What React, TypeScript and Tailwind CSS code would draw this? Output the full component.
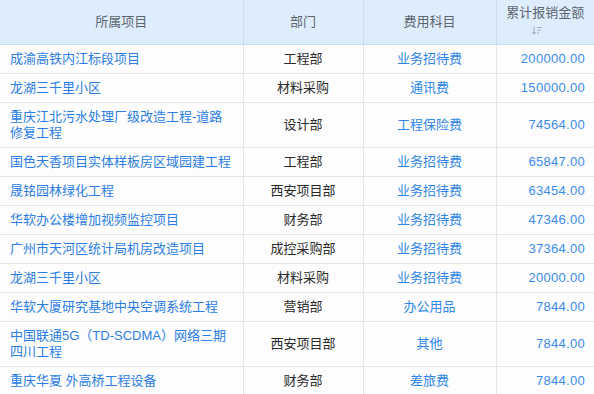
const rows = [
  { project: "成渝高铁内江标段项目", dept: "工程部", item: "业务招待费", amount: "200000.00" },
  { project: "龙湖三千里小区", dept: "材料采购", item: "通讯费", amount: "150000.00" },
  { project: "重庆江北污水处理厂级改造工程-道路修复工程", dept: "设计部", item: "工程保险费", amount: "74564.00" },
  { project: "国色天香项目实体样板房区域园建工程", dept: "工程部", item: "业务招待费", amount: "65847.00" },
  { project: "晟铭园林绿化工程", dept: "西安项目部", item: "业务招待费", amount: "63454.00" },
  { project: "华软办公楼增加视频监控项目", dept: "财务部", item: "业务招待费", amount: "47346.00" },
  { project: "广州市天河区统计局机房改造项目", dept: "成控采购部", item: "业务招待费", amount: "37364.00" },
  { project: "龙湖三千里小区", dept: "材料采购", item: "业务招待费", amount: "20000.00" },
  { project: "华软大厦研究基地中央空调系统工程", dept: "营销部", item: "办公用品", amount: "7844.00" },
  { project: "中国联通5G（TD-SCDMA）网络三期四川工程", dept: "西安项目部", item: "其他", amount: "7844.00" },
  { project: "重庆华夏 外高桥工程设备", dept: "财务部", item: "差旅费", amount: "7844.00" },
];

function SortIcon() {
  return (
    <svg width="10" height="9" viewBox="0 0 10 9" className="block ml-[35px]">
      <path d="M2 0.5V8M0.2 6L2 8L3.8 6" stroke="#9fb4c8" strokeWidth="1.1" fill="none" />
      <path d="M5 1.5H10M5 4.2H8.6M5 7H7.2" stroke="#9fb4c8" strokeWidth="1.1" fill="none" />
    </svg>
  );
}

export default function App() {
  return (
    <div className="w-[594px] h-[394px] overflow-hidden bg-white font-['Liberation_Sans','Noto_Sans_CJK_SC',sans-serif] text-[13px] leading-4">
      <table className="w-[594px] table-fixed border-collapse">
        <colgroup>
          <col className="w-[243px]" />
          <col className="w-[120px]" />
          <col className="w-[133px]" />
          <col className="w-[98px]" />
        </colgroup>
        <thead>
          <tr className="h-[44px] bg-[#deedfb] text-[#5c6670] border-b border-[#c6dcef]">
            <th className="font-normal text-center border-r border-[#c9ddef]">所属项目</th>
            <th className="font-normal text-center border-r border-[#c9ddef]">部门</th>
            <th className="font-normal text-center border-r border-[#c9ddef]">费用科目</th>
            <th className="font-normal text-center align-top pt-[5px]">
              <div>累计报销金额</div>
              <div className="pt-[5px]">
                <SortIcon />
              </div>
            </th>
          </tr>
        </thead>
        <tbody>
          {rows.map((r, i) => (
            <tr key={i} className="bg-[#fdfdfe] border-b border-[#e4e4e6]">
              <td className="py-[6px] pl-[10px] pr-[10px] text-[#2b7de3] border-r border-[#e4e4e6]">{r.project}</td>
              <td className="py-[6px] text-center text-[#2a2a2a] border-r border-[#e4e4e6]">{r.dept}</td>
              <td className="py-[6px] text-center text-[#2f86e8] border-r border-[#e4e4e6]">{r.item}</td>
              <td className="py-[6px] pr-[9px] text-right text-[#3a8cec] tracking-[0.3px]">{r.amount}</td>
            </tr>
          ))}
        </tbody>
      </table>
    </div>
  );
}
